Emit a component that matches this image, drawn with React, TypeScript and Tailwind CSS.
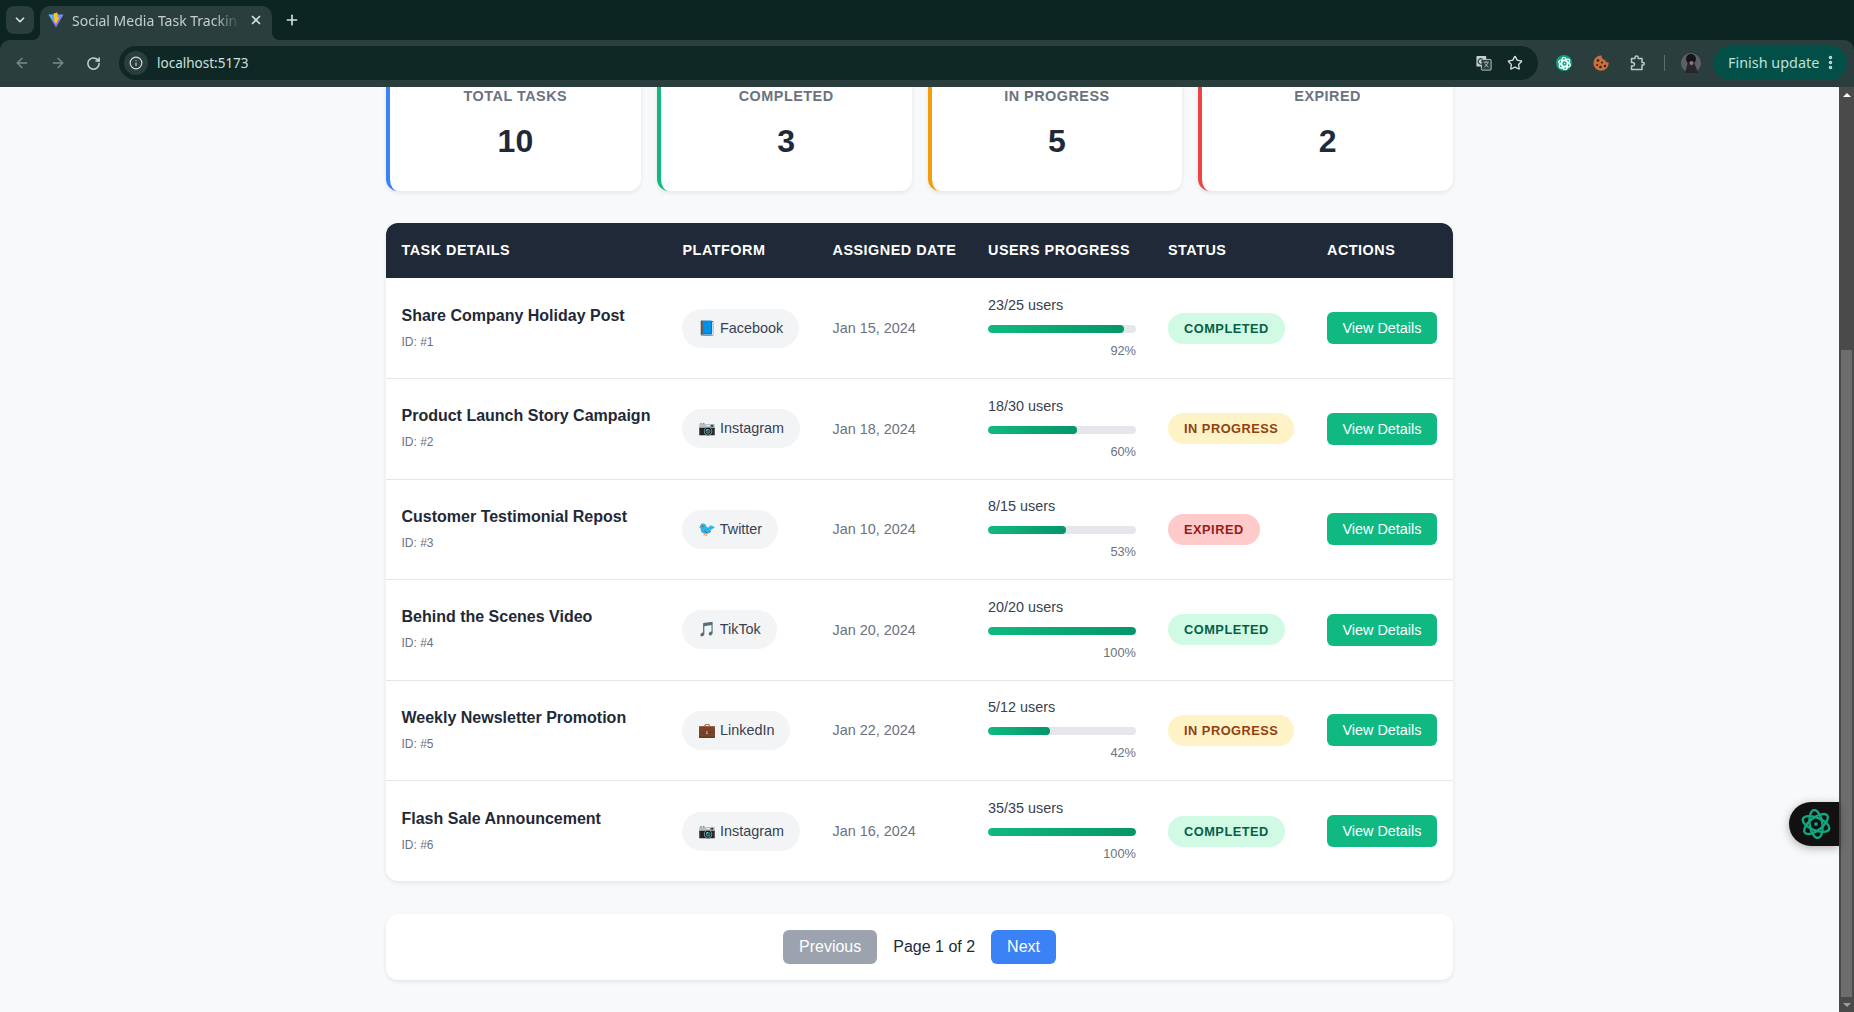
import { ArrowLeft, ArrowRight, ChevronDown, EllipsisVertical, Info, Plus, RotateCw, Star, X } from "lucide-react";

const stats = [
  { label: "Total Tasks", value: 10, border: "border-l-[#3b82f6]" },
  { label: "Completed", value: 3, border: "border-l-[#10b981]" },
  { label: "In Progress", value: 5, border: "border-l-[#f59e0b]" },
  { label: "Expired", value: 2, border: "border-l-[#ef4444]" },
];

const statusStyles: Record<string, string> = {
  Completed: "bg-[#d1fae5] text-[#065f46]",
  "In Progress": "bg-[#fef3c7] text-[#92400e]",
  Expired: "bg-[#fecaca] text-[#991b1b]",
};

const tasks = [
  { id: 1, title: "Share Company Holiday Post", icon: "📘", platform: "Facebook", date: "Jan 15, 2024", done: 23, total: 25, status: "Completed" },
  { id: 2, title: "Product Launch Story Campaign", icon: "📷", platform: "Instagram", date: "Jan 18, 2024", done: 18, total: 30, status: "In Progress" },
  { id: 3, title: "Customer Testimonial Repost", icon: "🐦", platform: "Twitter", date: "Jan 10, 2024", done: 8, total: 15, status: "Expired" },
  { id: 4, title: "Behind the Scenes Video", icon: "🎵", platform: "TikTok", date: "Jan 20, 2024", done: 20, total: 20, status: "Completed" },
  { id: 5, title: "Weekly Newsletter Promotion", icon: "💼", platform: "LinkedIn", date: "Jan 22, 2024", done: 5, total: 12, status: "In Progress" },
  { id: 6, title: "Flash Sale Announcement", icon: "📷", platform: "Instagram", date: "Jan 16, 2024", done: 35, total: 35, status: "Completed" },
];

const ViteLogo = () => (
  <svg width="16" height="16" viewBox="0 0 16 16">
    <defs>
      <linearGradient id="vite" x1="0" y1="0" x2="1" y2="1">
        <stop offset="0" stopColor="#41d1ff" />
        <stop offset="1" stopColor="#bd34fe" />
      </linearGradient>
    </defs>
    <path d="M0.5 2.5 L15.5 2.5 L8 15.5 Z" fill="url(#vite)" />
    <path d="M9.5 0.5 L5.5 1.5 L6.5 7 L5.5 8 L8 12 L11.5 5 L9.5 5.5 Z" fill="#ffc517" />
  </svg>
);

const AtomIcon = ({ size, color, width }: { size: number; color: string; width: number }) => (
  <svg width={size} height={size} viewBox="0 0 32 32" fill="none" stroke={color} strokeWidth={width}>
    <ellipse cx="16" cy="16" rx="15" ry="6.8" transform="rotate(22 16 16)" />
    <ellipse cx="16" cy="16" rx="15" ry="6.8" transform="rotate(82 16 16)" />
    <ellipse cx="16" cy="16" rx="15" ry="6.8" transform="rotate(142 16 16)" />
    <circle cx="16" cy="16" r="2" fill={color} stroke="none" />
  </svg>
);

const TranslateIcon = () => (
  <svg width="16" height="16" viewBox="0 0 18 18">
    <rect x="0.5" y="1" width="11" height="12" rx="1" fill="#c9d1cf" />
    <rect x="6" y="5" width="11" height="12" rx="1" fill="#2a3f3d" stroke="#c9d1cf" strokeWidth="1" />
    <path d="M8.5 8h6M11.5 7v1.5M9.5 14l4-5M10 9.5l4 4.5" stroke="#c9d1cf" strokeWidth="0.9" fill="none" />
    <path d="M7.5 5a3 3 0 1 0 0 4.5V7H5.5" stroke="#2a3f3d" strokeWidth="1.2" fill="none" />
  </svg>
);

const CookieIcon = () => (
  <svg width="16" height="16" viewBox="0 0 16 16">
    <path d="M8.5 0.6 A7.6 7.6 0 1 0 15.6 7.5 C13.5 7.8 12.2 6.6 12 5 C10 5 8.4 3 8.5 0.6 Z" fill="#c9703e" />
    <circle cx="5" cy="5.5" r="1.3" fill="#33201a" />
    <circle cx="9" cy="7.5" r="1.1" fill="#33201a" />
    <circle cx="4.2" cy="10" r="1" fill="#33201a" />
    <circle cx="7.5" cy="12" r="1.3" fill="#33201a" />
    <circle cx="12" cy="11" r="1.2" fill="#33201a" />
  </svg>
);

const ExtensionIcon = () => (
  <svg width="17" height="17" viewBox="0 0 17 17" fill="none" stroke="#b9c9c6" strokeWidth="1.5" strokeLinejoin="round">
    <path d="M2.5 3.5h3.5v-1a1.6 1.6 0 0 1 3.2 0v1h3.8v4h1a1.3 1.3 0 0 1 0 2.6h-1v4.4H2.5v-3.5h1.2a1.75 1.75 0 0 0 0-3.5H2.5z" />
  </svg>
);

const Avatar = () => (
  <svg width="20" height="20" viewBox="0 0 20 20">
    <circle cx="10" cy="10" r="10" fill="#5c6068" />
    <circle cx="10" cy="6" r="5" fill="#14141a" />
    <path d="M4 20 L7 9 L13 9 L17 20 Z" fill="#26262c" />
    <circle cx="10.5" cy="10" r="2" fill="#8a7d78" />
  </svg>
);

const BrowserChrome = () => (
  <header className="shrink-0 bg-[#0c2523] font-['Noto_Sans',sans-serif] text-[#d5dedc]">
    <div className="flex h-10 items-start pl-1.5 pt-1.5">
      <button className="flex h-7 w-7 items-center justify-center rounded-lg bg-[#2a3f3d]">
        <ChevronDown size={14} strokeWidth={3} />
      </button>
      <div className="relative ml-1.5 flex h-[34px] w-[232px] items-center rounded-t-[10px] bg-[#2a3f3d] pb-1.5 pl-2">
        <ViteLogo />
        <span className="ml-2 w-[168px] overflow-hidden whitespace-nowrap text-[14px] text-[#c5cfcd] [mask-image:linear-gradient(to_right,black_85%,transparent)]">
          Social Media Task Trackin
        </span>
        <X size={14} strokeWidth={3} className="ml-[9px]" />
        <span className="absolute bottom-0 left-full h-2 w-2 bg-[radial-gradient(circle_at_100%_0,transparent_8px,#2a3f3d_8px)]" />
        <span className="absolute bottom-0 right-full h-2 w-2 bg-[radial-gradient(circle_at_0_0,transparent_8px,#2a3f3d_8px)]" />
      </div>
      <Plus size={16} strokeWidth={2.5} className="ml-3 mt-1.5" />
    </div>
    <div className="flex h-[47px] items-center rounded-t-[10px] bg-[#2a3f3d] pb-px pl-3.5">
      <ArrowLeft size={16} className="text-[#7d8c8a]" />
      <ArrowRight size={16} className="ml-5 text-[#7d8c8a]" />
      <RotateCw size={15} strokeWidth={2.4} className="ml-5 text-[#c9d1cf]" />
      <div className="ml-[18px] flex h-[34px] w-[1419px] items-center rounded-full bg-[#0f2725] pl-[5px] pr-[15px]">
        <span className="flex h-6 w-6 items-center justify-center rounded-full bg-[#2a3f3d]">
          <Info size={14} />
        </span>
        <span className="ml-[9px] text-[13.5px] text-[#c9e0de]">localhost:5173</span>
        <span className="ml-auto"><TranslateIcon /></span>
        <Star size={16} strokeWidth={2} className="ml-[15px]" />
      </div>
      <span className="ml-[18px] flex h-4 w-4 items-center justify-center rounded-full bg-[#10a37f]">
        <AtomIcon size={13} color="#ffffff" width={3.2} />
      </span>
      <span className="ml-[21px]"><CookieIcon /></span>
      <span className="ml-5"><ExtensionIcon /></span>
      <span className="ml-[18px] h-4 w-px bg-[#55706d]" />
      <span className="ml-4"><Avatar /></span>
      <div className="ml-3 flex h-[34px] w-[134px] items-center rounded-full bg-[#024f47] pb-px pl-[15px] text-[14.4px] text-[#bfe0da]">
        Finish update
        <EllipsisVertical size={17} strokeWidth={3} className="ml-[3px]" />
      </div>
    </div>
  </header>
);

const Scrollbar = () => (
  <div className="flex w-[15px] shrink-0 flex-col bg-[#4a4a4a]">
    <div className="flex h-[15px] items-center justify-center">
      <span className="h-0 w-0 border-x-[4px] border-b-[4px] border-x-transparent border-b-white" />
    </div>
    <div className="flex-1 pt-[248px]">
      <div className="mx-0.5 h-full bg-[#6d6d6d]" />
    </div>
    <div className="flex h-[15px] items-center justify-center">
      <span className="h-0 w-0 border-x-[4px] border-t-[4px] border-x-transparent border-t-[#a0a0a0]" />
    </div>
  </div>
);

const App = () => {
  return (
    <div className="flex h-screen flex-col overflow-hidden bg-[#f8f9fb] font-['Liberation_Sans',sans-serif]">
      <BrowserChrome />
      <div className="relative flex min-h-0 flex-1">
        <main className="min-w-0 flex-1 overflow-hidden">
          <div className="mx-auto w-[1067px]">
            <div className="-mt-[24px] grid grid-cols-4 gap-4">
              {stats.map((stat) => (
                <div
                  key={stat.label}
                  className={`h-[128px] rounded-xl border-l-4 bg-white pt-[22px] text-center shadow-[0_2px_4px_rgba(0,0,0,0.08)] ${stat.border}`}
                >
                  <div className="text-[14.4px] font-semibold uppercase leading-[22px] tracking-[0.5px] text-[#6b7280]">{stat.label}</div>
                  <div className="mt-[9px] text-[32px] font-bold leading-[51px] text-[#1f2937]">{stat.value}</div>
                </div>
              ))}
            </div>

            <div className="mt-8 overflow-hidden rounded-xl bg-white shadow-[0_2px_4px_rgba(0,0,0,0.08)]">
              <table className="w-full table-fixed border-collapse">
                <colgroup>
                  <col className="w-[280px]" />
                  <col className="w-[150px]" />
                  <col className="w-[156px]" />
                  <col className="w-[180px]" />
                  <col className="w-[159px]" />
                  <col className="w-[142px]" />
                </colgroup>
                <thead>
                  <tr className="h-[55px] bg-[#1f2937] text-left text-[14.4px] font-semibold uppercase tracking-[0.5px] text-white">
                    <th className="pl-[15.5px] font-semibold">Task Details</th>
                    <th className="pl-[16.5px] font-semibold">Platform</th>
                    <th className="pl-[16.5px] font-semibold">Assigned Date</th>
                    <th className="pl-4 font-semibold">Users Progress</th>
                    <th className="pl-4 font-semibold">Status</th>
                    <th className="pl-4 font-semibold">Actions</th>
                  </tr>
                </thead>
                <tbody>
                  {tasks.map((task, index) => {
                    const percent = Math.round((task.done / task.total) * 100);
                    return (
                      <tr key={task.id} className={`h-[100.5px] ${index < tasks.length - 1 ? "border-b border-[#e5e7eb]" : ""}`}>
                        <td className="pb-[2px] pl-[15.5px]">
                          <div className="text-[16px] font-semibold leading-[26px] text-[#1f2937]">{task.title}</div>
                          <div className="mt-1 text-[12px] leading-[19px] text-[#6b7280]">ID: #{task.id}</div>
                        </td>
                        <td className="pl-4">
                          <span className="inline-block rounded-[20px] bg-[#f3f4f6] px-4 py-2 text-[14.4px] leading-[23px] text-[#374151]">
                            {task.icon} {task.platform}
                          </span>
                        </td>
                        <td className="pl-[16.5px] pt-[2px] text-[14.4px] text-[#6b7280]">{task.date}</td>
                        <td className="pb-[2px] pl-4">
                          <div className="w-[148px]">
                            <div className="text-[14.4px] leading-[23px] text-[#374151]">{task.done}/{task.total} users</div>
                            <div className="mt-2 h-2 overflow-hidden rounded bg-[#e5e7eb]">
                              <div className="h-full rounded bg-gradient-to-r from-[#10b981] to-[#059669]" style={{ width: `${percent}%` }} />
                            </div>
                            <div className="mt-2 text-right text-[12.8px] leading-[19px] text-[#6b7280]">{percent}%</div>
                          </div>
                        </td>
                        <td className="pl-4">
                          <span className={`inline-block rounded-[20px] px-4 py-2 text-[12.8px] font-bold uppercase leading-[15px] tracking-[0.5px] ${statusStyles[task.status]}`}>
                            {task.status}
                          </span>
                        </td>
                        <td className="pl-4">
                          <button className="h-8 w-[110px] rounded-md bg-[#10b981] pt-[2px] text-[14.4px] text-white">View Details</button>
                        </td>
                      </tr>
                    );
                  })}
                </tbody>
              </table>
            </div>

            <div className="mt-[33px] flex h-[66px] items-center justify-center gap-4 rounded-xl bg-white shadow-[0_2px_4px_rgba(0,0,0,0.08)]">
              <button className="h-[34px] rounded-md bg-[#9ca3af] px-4 text-[16px] text-white">Previous</button>
              <span className="text-[16px] text-[#1f2937]">Page 1 of 2</span>
              <button className="h-[34px] rounded-md bg-[#3b82f6] px-4 text-[16px] text-white">Next</button>
            </div>
          </div>
        </main>
        <Scrollbar />
        <div className="absolute right-[15px] top-[715px] flex h-[44px] w-[50px] items-center rounded-l-[22px] bg-[#111111] pl-3 shadow-[0_2px_10px_rgba(0,0,0,0.3)]">
          <AtomIcon size={30} color="#10a87f" width={2.5} />
        </div>
      </div>
    </div>
  );
};

export default App;
